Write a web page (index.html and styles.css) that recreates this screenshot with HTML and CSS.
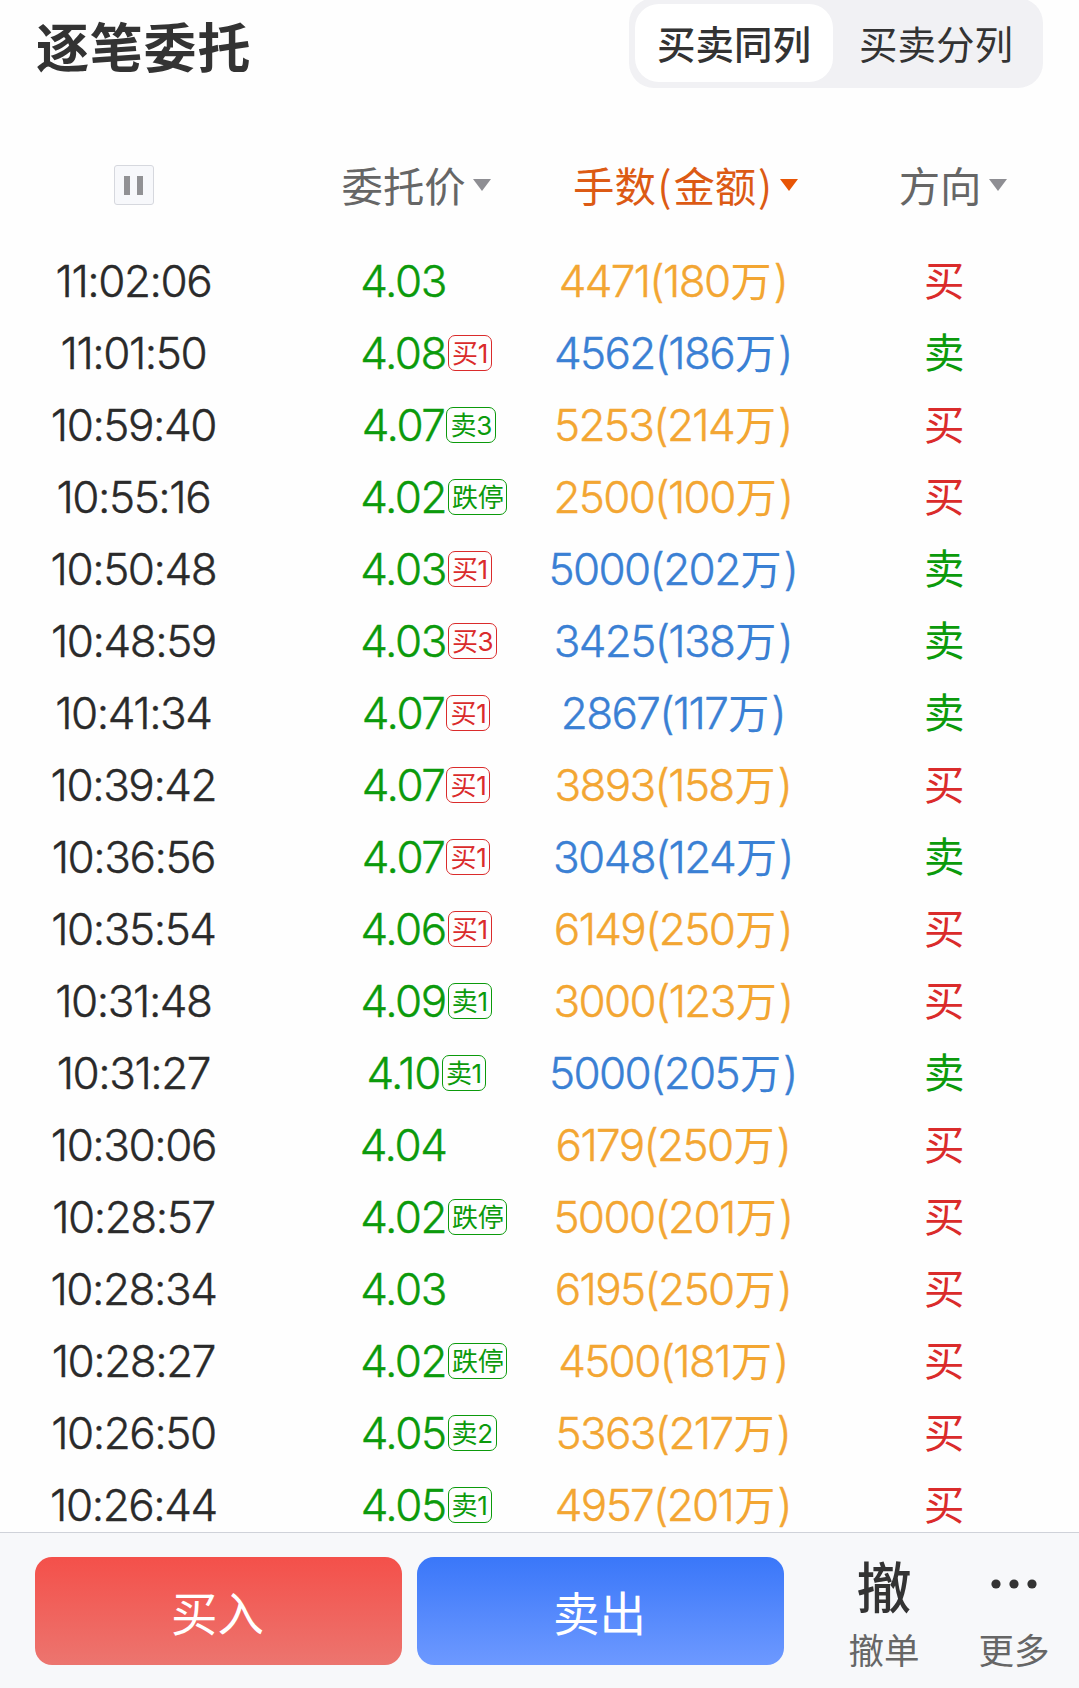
FILE: index.html
```
<!DOCTYPE html>
<html lang="zh-CN">
<head>
<meta charset="utf-8">
<title>逐笔委托</title>
<link rel="stylesheet" href="styles.css">
</head>
<body>
<div class="page">
  <header class="top">
    <h1 class="title">逐笔委托</h1>
    <div class="tabs">
      <div class="tab active">买卖同列</div>
      <div class="tab">买卖分列</div>
    </div>
  </header>
  <div class="head">
    <div class="cell"><span class="pause"><i></i><i></i></span></div>
    <div class="cell"><span class="sort">委托价</span></div>
    <div class="cell"><span class="sort on">手数<s>(</s>金额<s>)</s></span></div>
    <div class="cell"><span class="sort last">方向</span></div>
  </div>
  <main class="list">
    <div class="row"><div class="cell time">11:02:06</div><div class="cell"><span class="price">4.03</span></div><div class="cell amt up">4471(180<b>万</b>)</div><div class="cell buy">买</div></div>
    <div class="row"><div class="cell time">11:01:50</div><div class="cell"><span class="price">4.08<em class="tag buy">买1</em></span></div><div class="cell amt down">4562(186<b>万</b>)</div><div class="cell sell">卖</div></div>
    <div class="row"><div class="cell time">10:59:40</div><div class="cell"><span class="price">4.07<em class="tag sell">卖3</em></span></div><div class="cell amt up">5253(214<b>万</b>)</div><div class="cell buy">买</div></div>
    <div class="row"><div class="cell time">10:55:16</div><div class="cell"><span class="price">4.02<em class="tag sell">跌停</em></span></div><div class="cell amt up">2500(100<b>万</b>)</div><div class="cell buy">买</div></div>
    <div class="row"><div class="cell time">10:50:48</div><div class="cell"><span class="price">4.03<em class="tag buy">买1</em></span></div><div class="cell amt down">5000(202<b>万</b>)</div><div class="cell sell">卖</div></div>
    <div class="row"><div class="cell time">10:48:59</div><div class="cell"><span class="price">4.03<em class="tag buy">买3</em></span></div><div class="cell amt down">3425(138<b>万</b>)</div><div class="cell sell">卖</div></div>
    <div class="row"><div class="cell time">10:41:34</div><div class="cell"><span class="price">4.07<em class="tag buy">买1</em></span></div><div class="cell amt down">2867(117<b>万</b>)</div><div class="cell sell">卖</div></div>
    <div class="row"><div class="cell time">10:39:42</div><div class="cell"><span class="price">4.07<em class="tag buy">买1</em></span></div><div class="cell amt up">3893(158<b>万</b>)</div><div class="cell buy">买</div></div>
    <div class="row"><div class="cell time">10:36:56</div><div class="cell"><span class="price">4.07<em class="tag buy">买1</em></span></div><div class="cell amt down">3048(124<b>万</b>)</div><div class="cell sell">卖</div></div>
    <div class="row"><div class="cell time">10:35:54</div><div class="cell"><span class="price">4.06<em class="tag buy">买1</em></span></div><div class="cell amt up">6149(250<b>万</b>)</div><div class="cell buy">买</div></div>
    <div class="row"><div class="cell time">10:31:48</div><div class="cell"><span class="price">4.09<em class="tag sell">卖1</em></span></div><div class="cell amt up">3000(123<b>万</b>)</div><div class="cell buy">买</div></div>
    <div class="row"><div class="cell time">10:31:27</div><div class="cell"><span class="price">4.10<em class="tag sell">卖1</em></span></div><div class="cell amt down">5000(205<b>万</b>)</div><div class="cell sell">卖</div></div>
    <div class="row"><div class="cell time">10:30:06</div><div class="cell"><span class="price">4.04</span></div><div class="cell amt up">6179(250<b>万</b>)</div><div class="cell buy">买</div></div>
    <div class="row"><div class="cell time">10:28:57</div><div class="cell"><span class="price">4.02<em class="tag sell">跌停</em></span></div><div class="cell amt up">5000(201<b>万</b>)</div><div class="cell buy">买</div></div>
    <div class="row"><div class="cell time">10:28:34</div><div class="cell"><span class="price">4.03</span></div><div class="cell amt up">6195(250<b>万</b>)</div><div class="cell buy">买</div></div>
    <div class="row"><div class="cell time">10:28:27</div><div class="cell"><span class="price">4.02<em class="tag sell">跌停</em></span></div><div class="cell amt up">4500(181<b>万</b>)</div><div class="cell buy">买</div></div>
    <div class="row"><div class="cell time">10:26:50</div><div class="cell"><span class="price">4.05<em class="tag sell">卖2</em></span></div><div class="cell amt up">5363(217<b>万</b>)</div><div class="cell buy">买</div></div>
    <div class="row"><div class="cell time">10:26:44</div><div class="cell"><span class="price">4.05<em class="tag sell">卖1</em></span></div><div class="cell amt up">4957(201<b>万</b>)</div><div class="cell buy">买</div></div>
  </main>
  <footer class="bar">
    <button class="btn red">买入</button>
    <button class="btn blue">卖出</button>
    <div class="act first"><span class="glyph">撤</span><span class="label">撤单</span></div>
    <div class="act"><span class="glyph"><svg width="46" height="10" viewBox="0 0 46 10"><circle cx="5" cy="5" r="4.6"/><circle cx="23" cy="5" r="4.6"/><circle cx="41" cy="5" r="4.6"/></svg></span><span class="label">更多</span></div>
  </footer>
</div>
</body>
</html>
```
FILE: styles.css
```
* { box-sizing: border-box; margin: 0; padding: 0; }
body { background: #fefefe; font-family: Inter, "Noto Sans CJK SC", sans-serif; color: #2a2a2a; }
.page { width: 1079px; height: 1688px; overflow: hidden; display: flex; flex-direction: column; }
.top { height: 131px; flex: none; display: flex; justify-content: space-between; align-items: flex-start; padding: 0 36px; }
.title { font: 700 53px/90px "Noto Sans CJK SC", sans-serif; letter-spacing: 0.8px; color: #333; }
.tabs { display: flex; width: 414px; height: 90px; margin-top: -2px; padding: 6px; background: #f1f1f4; border-radius: 25px; }
.tab { flex: 1; height: 78px; line-height: 77px; text-align: center; font-family: "Noto Sans CJK SC", sans-serif; font-size: 38.5px; color: #333; border-radius: 24px; white-space: nowrap; padding-left: 2px; }
.tab.active { flex: none; width: 198px; background: #fff; font-weight: 500; padding-left: 0; }
.head, .row { display: grid; grid-template-columns: repeat(4, 1fr); align-items: center; flex: none; }
.head { height: 108px; }
.cell { display: flex; justify-content: center; align-items: center; white-space: nowrap; }
.pause { display: flex; justify-content: center; align-items: center; gap: 7px; width: 40px; height: 40px; margin-right: 2px; border: 1px solid #d6d8de; border-radius: 3px; background: #f7f8fb; }
.pause i { width: 6px; height: 19px; background: #919194; }
.sort { position: relative; right: 1px; bottom: 1px; font-family: "Noto Sans CJK SC", sans-serif; font-size: 41.4px; line-height: 60px; color: #666; }
.sort s { text-decoration: none; margin: 0 1.8px; }
.sort::after { content: ""; position: absolute; left: calc(100% + 7px); top: 25px; border: 9px solid transparent; border-top: 12px solid #8e8e93; border-bottom: 0; }
.sort.on { color: #dc5a14; }
.sort.on::after { left: calc(100% + 6px); border-top-color: #e85505; }
.sort.last { right: 4px; }
.list { flex: none; height: 1293px; padding-top: 5px; overflow: hidden; }
.row { height: 72px; font-size: 44px; line-height: 72px; }
.time, .amt, .price { letter-spacing: -1.45px; font-weight: 300; -webkit-text-stroke: 0.4px currentColor; }
.price { position: relative; right: 1.5px; color: #0b9a0b; }
.time { padding-right: 3px; }
.amt { padding-right: 3px; letter-spacing: -1.65px; }
.up { color: #f3a632; }
.down { color: #3a80d4; }
.amt b { position: relative; top: 1px; margin: 0 2px 0 1px; font-weight: 400; font-size: 41px; letter-spacing: 0; -webkit-text-stroke: 0; }
.buy { color: #da2b2b; }
.sell { color: #0b9a0b; }
.cell.buy, .cell.sell { font-size: 40.5px; padding-top: 2px; }
.tag { position: absolute; left: calc(100% + 2px); top: 18px; height: 36px; padding: 0 3px; border: 1px solid currentColor; border-radius: 7px; font-style: normal; font-weight: 400; font-size: 26px; line-height: 36px; letter-spacing: -0.3px; -webkit-text-stroke: 0; }
.bar { flex: 1; display: flex; align-items: flex-start; background: #f7f8fa; border-top: 1px solid #cfd2d9; padding: 24px 0 0 35px; }
.btn { width: 367px; height: 108px; border: 0; border-radius: 17px; margin-right: 15px; padding-right: 2px; color: #fff; font: 400 46.5px/108px "Noto Sans CJK SC", sans-serif; }
.red { background: linear-gradient(#f4504a, #ec756f); }
.blue { background: linear-gradient(#3a77f9, #6d99ff); }
.act { width: 130px; display: flex; flex-direction: column; align-items: center; }
.act.first { margin-left: 20px; }
.glyph { height: 54px; display: flex; align-items: center; font-size: 55px; font-weight: 500; color: #333; fill: #333; }
.label { margin-top: 14px; font-size: 35.5px; line-height: 54px; color: #666; }
```
